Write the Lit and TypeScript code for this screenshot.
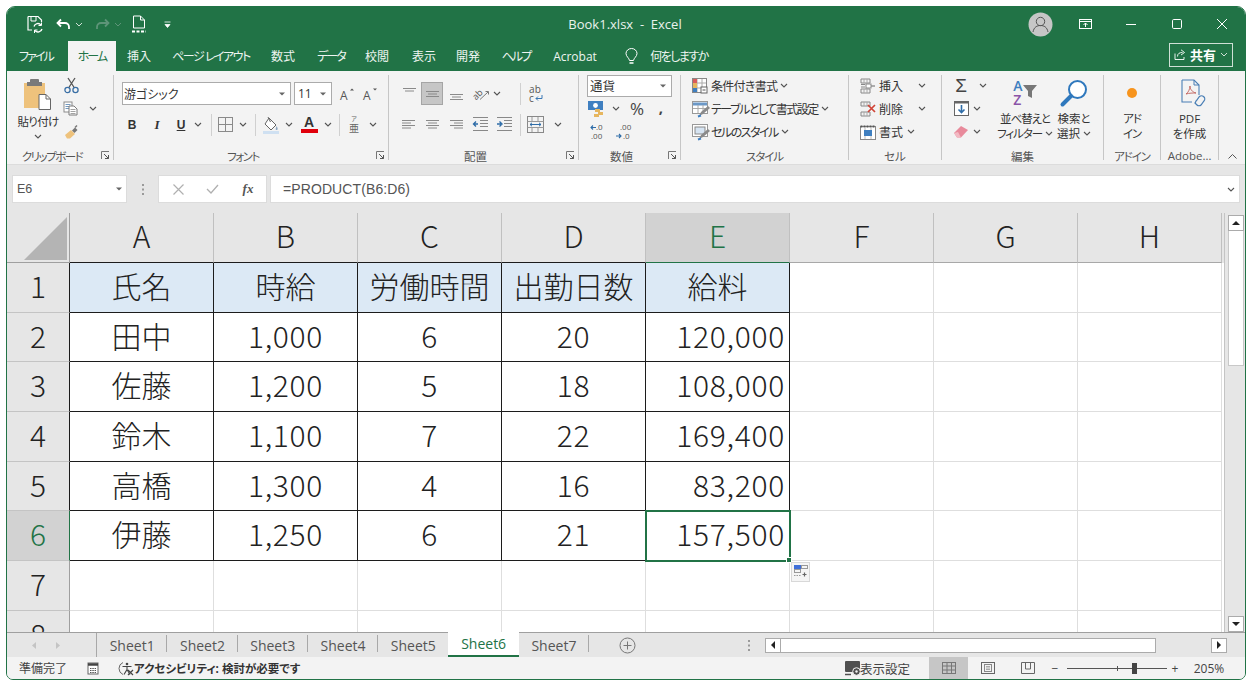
import { LitElement, html, css, svg } from "lit";
import { customElement } from "lit/decorators.js";

type Item = [number, unknown];
/** A row of tools placed by centre x: zero-width anchors separated by computed margins. */
const at = (origin: number, items: Item[]) => {
  let prev = origin;
  return items.map(([c, t]) => {
    const m = c - prev;
    prev = c;
    return html`<span class="at" style="margin-left:${m}px">${t}</span>`;
  });
};
const k = (s: string, cls = "k2") => html`<span class=${cls}>${s}</span>`;
const ic = (w: number, h: number, body: unknown) =>
  html`<svg width=${w} height=${h} viewBox="0 0 ${w} ${h}" fill="none">${body}</svg>`;
const chev = ic(8, 5, svg`<path d="M1 1l3 3 3-3" stroke="#555" stroke-width="1.1"/>`);
const chevW = ic(8, 5, svg`<path d="M1 1l3 3 3-3" stroke="#cfe0d6" stroke-width="1"/>`);
const chevD = ic(8, 5, svg`<path d="M1 1l3 3 3-3" stroke="#5d9478" stroke-width="1"/>`);
const tri = ic(6, 4, svg`<path d="M0 .5h6L3 3.5z" fill="#666"/>`);
const launcher = ic(9, 9, svg`<path d="M.5 8V.5H8" stroke="#777"/><path d="M3 3l4.5 4.5M7.5 4v3.5H4" stroke="#555"/>`);
const div = html`<span class="vdiv"></span>`;
const lines = (kind: string, y0: number, n = 3) => {
  const xs: Record<string, [number, number][]> = {
    l: [[1, 14], [1, 10], [1, 14], [1, 10]],
    c: [[1, 14], [3, 12], [1, 14], [3, 12]],
    r: [[1, 14], [5, 14], [1, 14], [5, 14]],
  };
  return ic(15, 14, svg`${xs[kind].slice(0, n).map(([a, b], i) => svg`<path d="M${a} ${y0 + i * 2.5 + .5}H${b}" stroke="#8a8a8a"/>`)}`);
};
const paste = ic(30, 34, svg`
  <rect x="1" y="6" width="21" height="25" fill="#eec27c"/>
  <rect x="7" y="2" width="9" height="7" rx="1" fill="#7a7a7a"/><rect x="4" y="5" width="15" height="4" fill="#7a7a7a"/>
  <path d="M16 17.5h7l4.5 4.5v10.5H16z" fill="#fff" stroke="#666"/><path d="M23 17.5V22h4.5" stroke="#666"/>`);
const scissors = ic(15, 17, svg`<path d="M4 1l6.5 10M11 1L4.5 11" stroke="#555" stroke-width="1.3"/><circle cx="3.5" cy="13" r="2.6" stroke="#3a6fa5" stroke-width="1.3"/><circle cx="11.5" cy="13" r="2.6" stroke="#3a6fa5" stroke-width="1.3"/>`);
const copy = ic(16, 15, svg`<rect x="1" y="1" width="8" height="10" fill="#fff" stroke="#8b8b8b"/><path d="M2.5 3.5h5M2.5 5.5h5M2.5 7.5h5" stroke="#4f7fae" stroke-width=".8"/><path d="M6 5h5l3 3v6H6z" fill="#fff" stroke="#7a7a7a"/><path d="M7.5 8.5h5M7.5 10.5h5M7.5 12.5h5" stroke="#8b8b8b" stroke-width=".8"/>`);
const brush = ic(15, 14, svg`<path d="M1 10l6-5 4 4-5 4.5H3z" fill="#eec27c"/><path d="M8 5.5l3-3 2.5 2.5-3 3z" fill="#777"/><path d="M11 2.5l2-2" stroke="#777" stroke-width="1.5"/>`);
const fontA = (up: boolean) => ic(15, 14, svg`<text x="0" y="13" font-size="12" fill="#555" font-family="Open Sans">A</text><path d="${up ? "M10 3.5l2-2 2 2" : "M10 1.5l2 2 2-2"}" fill="#555"/>`);
const borders = ic(15, 15, svg`<rect x=".5" y=".5" width="14" height="14" stroke="#8a8a8a"/><path d="M7.5 1v13M1 7.5h13" stroke="#8a8a8a"/>`);
const fill = ic(18, 18, svg`<path d="M7 2l7 7-5 5-6-6z" fill="#fff" stroke="#666"/><path d="M6 1l2.5 5" stroke="#666"/><path d="M14.5 10c1.2 2 1.5 3 .8 3.8-.8.6-1.8 0-1.6-1z" fill="#8fa8c2"/><rect x="1" y="15" width="16" height="3" fill="#cfe0f1"/>`);
const colorA = html`<span class="colora">A</span>`;
const ruby = html`<span class="ruby"><span class="rt">ア</span><span class="rb">亜</span></span>`;
const orient = ic(17, 15, svg`<text transform="rotate(-45 5 11)" x="1" y="12" font-size="9" fill="#555" font-family="Open Sans">ab</text><path d="M7 13.5L15 6M12.5 5.5H15.5V8.5" stroke="#777"/>`);
const wrap = html`<span class="wrapi"><span>ab</span><span class="wl2">c${ic(8, 7, svg`<path d="M7 0v3.500H1M3 1.500L1 3.500l2 2" stroke="#3a78b5"/>`)}</span></span>`;
const indent = (dec: boolean) => ic(16, 15, svg`<path d="M1 .5h15M8 3.5h8M8 6.5h8M8 9.5h8M1 13.5h15" stroke="#888"/><path d="${dec ? "M6 7H2M4 4.5L1.5 7 4 9.5" : "M1 7h4M3.5 4.5L6 7 3.5 9.5"}" stroke="#2f6da8" stroke-width="1.4"/>`);
const merge = ic(17, 17, svg`<rect x=".5" y=".5" width="16" height="16" stroke="#888"/><path d="M.5 5.5h16M.5 11.5h16M5 1v4M11 1v4M5 12v4M11 12v4" stroke="#999"/><path d="M3 8.5h11M5 6.8L3 8.5l2 1.7M12 6.8l2 1.7-2 1.7" stroke="#2f6da8"/>`);
const money = ic(20, 18, svg`<rect x="1" y="1" width="15" height="9" fill="#3f7fc0"/><circle cx="8.5" cy="5.5" r="2.4" fill="#fff"/><rect x="8" y="9" width="5" height="3" fill="#e6b65f"/><rect x="11" y="12" width="5" height="3" fill="#e6b65f"/><rect x="7" y="14" width="5" height="3" fill="#e6b65f"/>`);
const decUp = ic(20, 18, svg`<text x="6" y="7" font-size="8" fill="#555" font-family="Open Sans">.0</text><path d="M6 4.5H1M3 2.5l-2 2 2 2" stroke="#2f6da8" stroke-width="1.1"/><text x="1" y="16" font-size="8" fill="#555" font-family="Open Sans">.00</text>`);
const decDown = ic(20, 18, svg`<text x="5" y="7" font-size="8" fill="#555" font-family="Open Sans">.00</text><path d="M1 13h5M4 11l2 2-2 2" stroke="#2f6da8" stroke-width="1.1"/><text x="8" y="16" font-size="8" fill="#555" font-family="Open Sans">.0</text>`);
const condFmt = ic(16, 16, svg`<rect x=".5" y=".5" width="14" height="14" fill="#fff" stroke="#888"/><path d="M5 1v13M10 1v13M1 5h13M1 10h13" stroke="#aaa"/><rect x="1" y="1" width="4" height="4" fill="#d85c5c"/><rect x="1" y="5" width="4" height="5" fill="#e6b65f"/><rect x="1" y="10" width="4" height="4" fill="#3f7fc0"/><rect x="9" y="9" width="6" height="6" fill="#fff" stroke="#666"/><path d="M10.5 12h3" stroke="#555"/>`);
const tblFmt = ic(19, 16, svg`<rect x=".5" y=".5" width="15" height="12" fill="#fff" stroke="#999"/><path d="M1 3h14" stroke="#6b98c7" stroke-width="3"/><path d="M6 4v8M11 4v8M1 7.5h14" stroke="#aaa"/><path d="M7 15l2-4 7-6 2 2-7 6z" fill="#8a8a8a"/><path d="M6 15.5l3-1" stroke="#3f7fc0" stroke-width="2"/>`);
const cellFmt = ic(19, 16, svg`<rect x=".5" y=".5" width="15" height="12" fill="#fff" stroke="#999"/><rect x="3" y="3" width="10" height="7" fill="#d6e4f2" stroke="#888"/><path d="M7 15l2-4 7-6 2 2-7 6z" fill="#8a8a8a"/><path d="M6 15.5l3-1" stroke="#3f7fc0" stroke-width="2"/>`);
const insertI = ic(18, 16, svg`<path d="M2 1h9v4H2zM2 11h9v4H2zM2 6.5h4M2 9h4" stroke="#888"/><path d="M5 1v4M8 1v4M5 11v4M8 11v4" stroke="#aaa"/><path d="M8 8h8" stroke="#666" stroke-width="1.2"/><rect x="7" y="6" width="5" height="4" fill="#fff" stroke="#888"/>`);
const deleteI = ic(18, 16, svg`<path d="M2 1h9v4H2zM2 11h9v4H2z" stroke="#888"/><path d="M5 1v4M8 1v4M5 11v4M8 11v4" stroke="#aaa"/><path d="M9 4l7 7M16 4l-7 7" stroke="#d04437" stroke-width="1.7"/>`);
const formatI = ic(18, 16, svg`<rect x="1.5" y="2.5" width="15" height="13" fill="#fff" stroke="#888"/><path d="M1.5 2.5h15" stroke="#555" stroke-dasharray="2 1" stroke-width="2"/><path d="M6 3v12M12 3v12" stroke="#bbb"/><rect x="5" y="6" width="8" height="6" fill="#3f7fc0"/>`);
const sigma = html`<span class="sigma">Σ</span>`;
const filldown = ic(15, 15, svg`<rect x=".5" y=".5" width="14" height="14" fill="#fff" stroke="#666"/><path d="M1 1.5h13" stroke="#666" stroke-width="2"/><path d="M7.5 4v7M4.5 8.5l3 3 3-3" stroke="#2f6da8" stroke-width="1.6"/>`);
const eraser = ic(16, 13, svg`<path d="M1 8l7-7 7 4-7 7.5H4z" fill="#e88a9b"/><path d="M1 8l3 4.5h4L5 7z" fill="#f3b9c3"/>`);
const sortI = html`<span class="sorti"><span class="az"><span class="az-a">A</span><span class="az-z">Z</span></span>${ic(14, 14, svg`<path d="M0 0h14L9 6v7L5 11V6z" fill="#777"/>`)}</span>`;
const findI = ic(28, 28, svg`<circle cx="17.5" cy="10.5" r="8.5" stroke="#2f78bd" stroke-width="2" fill="#fff"/><path d="M11 17L2.5 25.5" stroke="#2f78bd" stroke-width="4" stroke-linecap="round"/>`);
const dot = ic(12, 12, svg`<circle cx="6" cy="6" r="5" fill="#f7941d"/>`);
const pdfI = ic(26, 28, svg`<path d="M2 1h12l5 5v10" stroke="#4a7fb5" stroke-width="1.1"/><path d="M14 1v5h5" stroke="#4a7fb5"/><path d="M2 1v22h10" stroke="#4a7fb5" stroke-width="1.1"/><path d="M6 15c2-1 4-5 4-8 0 3 2 6 6 7-3 0-7 0-10 1z" stroke="#c0605a" stroke-width=".9"/><path d="M15 24l2 2c1 1 3 1 4 0l3-4c1-1 1-3 0-4l-.5-.5c-1-1-3-1-4 0l-3 4c-1 1-1 2-1.500 2.500z" stroke="#4a7fb5" stroke-width="1.200"/>`);
const autosave = ic(18, 18, svg`<path d="M2 1.500h10l3.500 3.500v2M2 1.500v13.500h4" stroke="#fff" stroke-width="1.2"/><path d="M5 2v4h5V2" stroke="#fff"/><path d="M8 11.500a4 4 0 0 1 7-1.500M16 14a4 4 0 0 1-7 1.500" stroke="#fff" stroke-width="1.300"/><path d="M15.500 7.500v3h-3M8.500 18v-3h3" stroke="#fff"/>`);
const undo = ic(15, 12, svg`<path d="M5 1.500L1.500 5 5 8.500M2 5h7a4 4 0 0 1 4 4v2" stroke="#fff" stroke-width="1.800"/>`);
const redo = ic(15, 12, svg`<path d="M10 1.500L13.500 5 10 8.500M13 5H6a4 4 0 0 0-4 4v2" stroke="#5d9478" stroke-width="1.800"/>`);
const newdoc = ic(14, 18, svg`<path d="M1.500 1h7l4 4v8h-11z" stroke="#fff"/><path d="M8.500 1v4h4" stroke="#fff"/><path d="M0 16.500h14" stroke="#fff" stroke-width="2" stroke-dasharray="3 1.500"/>`);
const qatDrop = ic(7, 7, svg`<path d="M.5 1h6M1 3.500h5l-2.500 3z" stroke="#fff" fill="#fff" stroke-width=".8"/>`);
const avatar = ic(25, 25, svg`<circle cx="12.500" cy="12.500" r="12" fill="#c6c6c6"/><circle cx="12.500" cy="9.500" r="4.200" stroke="#555"/><path d="M5 20c1-5 4-6.500 7.500-6.500S19 15 20 20" stroke="#555"/>`);
const modeI = ic(13, 10, svg`<rect x=".5" y=".5" width="12" height="9" stroke="#fff"/><path d="M.5 2.500h12" stroke="#fff" stroke-width="1.200"/><path d="M6.500 8V4M4.500 6l2-2 2 2" stroke="#fff"/>`);
const minI = ic(10, 1, svg`<path d="M0 .5h10" stroke="#fff"/>`);
const maxI = ic(10, 10, svg`<rect x=".5" y=".5" width="9" height="9" rx="1.200" stroke="#fff"/>`);
const closeI = ic(10, 10, svg`<path d="M0 0l10 10M10 0L0 10" stroke="#fff"/>`);
const bulb = ic(13, 17, svg`<path d="M4.500 12.500C4.200 10 1 8.500 1 5.500a5.500 5 0 0 1 11 0c0 3-3.200 4.500-3.500 7z" stroke="#fff"/><path d="M4.500 15h4" stroke="#fff" stroke-width="1.300"/>`);
const shareI = ic(12, 11, svg`<path d="M1 4.500v6h9V8" stroke="#fff" stroke-width=".9"/><path d="M3.500 7.500c0-3 2-4 5-4M7 .8l3.500 2.700L7 6" stroke="#fff" stroke-width=".9"/>`);
const cancelI = ic(11, 11, svg`<path d="M.5.5l10 10M10.500.5l-10 10" stroke="#b0b0b0" stroke-width="1.200"/>`);
const enterI = ic(13, 10, svg`<path d="M1 5l4 4 7-8" stroke="#b0b0b0" stroke-width="1.300"/>`);
const grip = ic(2, 11, svg`<path d="M1 0v11" stroke="#9a9a9a" stroke-width="2" stroke-dasharray="2 2.500"/>`);
const triUp = ic(8, 4, svg`<path d="M0 4L4 0l4 4z" fill="#222"/>`);
const triDown = ic(8, 4, svg`<path d="M0 0l4 4 4-4z" fill="#222"/>`);
const triLeft = ic(4, 8, svg`<path d="M4 0L0 4l4 4z" fill="#222"/>`);
const triRight = ic(4, 8, svg`<path d="M0 0l4 4-4 4z" fill="#222"/>`);
const navL = ic(4, 7, svg`<path d="M4 0L0 3.500 4 7z" fill="#c4c4c4"/>`);
const navR = ic(4, 7, svg`<path d="M0 0l4 3.500L0 7z" fill="#c4c4c4"/>`);
const plus = ic(17, 17, svg`<circle cx="8.500" cy="8.500" r="7.500" stroke="#777"/><path d="M8.500 4.500v8M4.500 8.500h8" stroke="#777"/>`);
const macro = ic(12, 13, svg`<rect x="1" y="1" width="10" height="11" fill="#fff" stroke="#666"/><path d="M1 2.500h10" stroke="#444" stroke-width="2.500"/><path d="M3 6.500h6M3 8.500h6M3 10.500h6" stroke="#555" stroke-dasharray="1.500 .8"/>`);
const a11y = ic(16, 15, svg`<path d="M5 1.500a6.500 6.500 0 0 0 0 12" stroke="#666"/><circle cx="9" cy="3" r="1.300" fill="#444"/><path d="M4.500 5.500h9M9 5.500v3l-3 5M9 8.500l3 5" stroke="#444" stroke-width="1.100"/><path d="M10 9l5 5M15 9l-5 5" stroke="#444" stroke-width="1.200"/>`);
const displayI = ic(17, 15, svg`<rect x="0" y="0" width="15" height="11" rx="1" fill="#505050"/><path d="M0 13.500h6" stroke="#505050" stroke-width="1.500"/><circle cx="11.500" cy="10.500" r="3.800" fill="#505050" stroke="#f3f3f3"/><circle cx="11.500" cy="10.500" r="1.200" fill="#f3f3f3"/>`);
const gridI = ic(14, 12, svg`<rect x=".5" y=".5" width="13" height="11" stroke="#777"/><path d="M5 1v10M9.500 1v10M1 4h12M1 8h12" stroke="#777"/>`);
const pageI = ic(14, 12, svg`<rect x=".5" y=".5" width="13" height="11" stroke="#666"/><rect x="3.500" y="2.500" width="7" height="7" stroke="#888"/><path d="M5 4.500h4M5 6h4M5 7.500h4" stroke="#888" stroke-width=".7"/>`);
const breakI = ic(14, 12, svg`<path d="M.5.5h13v11H.5z" stroke="#666"/><path d="M4.500 1v6h5V1" stroke="#666"/>`);
const autofill = ic(18, 19, svg`
  <rect x="2" y="3" width="7" height="4" fill="#3f6fd8"/><rect x="9.500" y="3.500" width="6" height="3" stroke="#999"/>
  <rect x="2.500" y="7.500" width="6" height="3" stroke="#999"/><path d="M2 13.500h7" stroke="#999" stroke-dasharray="1.500 1"/>
  <path d="M12.500 10.500v4M10.500 12.500h4" stroke="#666" stroke-width="1.200"/>`);

const ROWS: string[][] = [
  ["氏名", "時給", "労働時間", "出勤日数", "給料"],
  ["田中", "1,000", "6", "20", "120,000"],
  ["佐藤", "1,200", "5", "18", "108,000"],
  ["鈴木", "1,100", "7", "22", "169,400"],
  ["高橋", "1,300", "4", "16", "83,200"],
  ["伊藤", "1,250", "6", "21", "157,500"],
];
const COLS = ["A", "B", "C", "D", "E", "F", "G", "H"];

@customElement("app-root")
export class AppRoot extends LitElement {
  static styles = css`
    :host { display: block; width: 1252px; height: 686px; background: #fff; overflow: hidden;
      font-family: "Open Sans", "Noto Sans CJK JP", sans-serif; font-feature-settings: "palt"; color: #444; }
    svg { display: block; overflow: visible; flex: none; }
    .at { width: 0; flex: none; display: flex; justify-content: center; align-items: center; white-space: nowrap; }
    .at > * { flex: none; }
    .k0 { letter-spacing: -.7px; } .k1 { letter-spacing: -1.100px; } .k2 { letter-spacing: -1.500px; } .k3 { letter-spacing: -1.900px; }
    .win { margin: 6px 0 0 6px; width: 1240px; height: 674px; box-sizing: border-box; background: #f3f3f3;
      border: 1px solid #217346; border-radius: 9px 9px 7px 7px; overflow: hidden; display: flex; flex-direction: column; }
    .title { height: 34px; background: #217346; display: flex; align-items: center; color: #e9f2ed; font-size: 13px; flex: none; }
    .tabs { height: 30px; background: #217346; display: flex; align-items: center; color: #eef5f1; font-size: 12px; flex: none; }
    .hometab { width: 48px; height: 30px; background: #f3f3f3; color: #217346; display: flex; align-items: center; justify-content: center; }
    .tabs .at { height: 30px; }
    .share { width: 64px; height: 24px; margin-bottom: 3px; border: 1px solid #cfe0d6; box-sizing: border-box; display: flex; align-items: center; justify-content: center; gap: 4px; color: #fff; font-weight: 700; font-size: 13px; }
    .ribbon { height: 93px; flex: none; display: flex; background: #f3f3f3; font-size: 12px; }
    .sep { width: 1px; height: 85px; margin-top: 4px; background: #c6c6c6; flex: none; }
    .g { display: flex; flex-direction: column; flex: none; }
    .g1 { width: 106px; } .g2 { width: 274px; } .g3 { width: 189px; } .g4 { width: 101px; }
    .g5 { width: 167px; } .g6 { width: 92px; } .g7 { width: 161px; } .g8 { width: 56px; } .g9 { width: 57px; }
    .g10 { flex: 1; display: flex; align-items: flex-end; justify-content: center; padding-bottom: 5px; }
    .body { height: 76px; flex: none; }
    .foot { height: 17px; display: flex; align-items: center; font-size: 11.500px; color: #555; }
    .foot .t { flex: 1; text-align: center; white-space: nowrap; }
    .foot .l { width: 16px; display: flex; justify-content: center; flex: none; }
    .clip { display: grid; grid-template-columns: 62px 1fr; }
    .pastebtn { display: flex; flex-direction: column; align-items: center; padding-top: 6px; font-size: 11.500px; line-height: 15px; color: #333; }
    .pastebtn svg:first-child { margin-bottom: 3px; }
    .pastebtn .c2 { margin-top: 5px; }
    .three { padding-top: 3px; }
    .r { display: flex; height: 23px; align-items: center; }
    .r1 { margin-top: 11px; }
    .r2 { margin-top: 8px; }
    .combo { height: 23px; background: #fff; border: 1px solid #ababab; box-sizing: border-box; display: flex; align-items: center; justify-content: space-between; padding: 0 5px 0 1px; flex: none; font-size: 12px; color: #333; }
    .c-font { width: 169px; margin-left: 8px; }
    .c-size { width: 38px; margin-left: 3px; padding-left: 3px; }
    .c-num { width: 85px; height: 22px; margin-left: 8px; padding-left: 2px; font-size: 12.500px; }
    .b { font: 700 12px "Liberation Sans", sans-serif; color: #333; }
    .i { font: italic 700 13px "Liberation Serif", serif; color: #333; }
    .u { font: 700 12px "Liberation Sans", sans-serif; color: #333; text-decoration: underline; }
    .vdiv { width: 1px; height: 22px; background: #d0d0d0; display: block; }
    .colora { font: 700 14px/13px "Liberation Sans", sans-serif; width: 17px; text-align: center; color: #333; border-bottom: 4px solid #e0000b; display: block; }
    .ruby { display: flex; flex-direction: column; align-items: center; color: #666; }
    .rt { font-size: 6px; line-height: 7px; }
    .rb { font-size: 10px; line-height: 11px; }
    .wrapi { display: flex; flex-direction: column; font-size: 10px; line-height: 9px; color: #555; }
    .wl2 { display: flex; align-items: center; gap: 1px; }
    .hl { width: 22px; height: 23px; background: #c6c6c6; border: 1px solid #a5a5a5; box-sizing: border-box; display: flex; align-items: center; justify-content: center; }
    .pct { font-size: 17px; color: #444; }
    .comma { font-size: 15px; font-weight: 700; color: #444; margin-top: -4px; }
    .sty { display: flex; align-items: center; gap: 3px; padding-left: 11px; height: 23px; white-space: nowrap; color: #333; font-size: 12px; }
    .ib { width: 16px; flex: none; display: flex; }
    .cellrow { display: flex; align-items: center; height: 23px; color: #333; font-size: 12px; }
    .sigma { font: 400 19px/19px "Liberation Sans", sans-serif; color: #444; }
    .edit { display: flex; }
    .editl { width: 57px; flex: none; }
    .big { display: flex; flex-direction: column; align-items: center; padding-top: 8px; font-size: 11.500px; line-height: 15px; color: #333; white-space: nowrap; flex: none; }
    .big .ico { height: 32px; display: flex; align-items: flex-start; justify-content: center; }
    .big .txt { display: flex; align-items: center; gap: 3px; }
    .sorti { display: flex; align-items: flex-start; gap: 0; }
    .az { display: flex; flex-direction: column; font-weight: 600; font-size: 14px; line-height: 14px; }
    .az-a { color: #3f7fc0; } .az-z { color: #8a54a8; }
    .sorti svg { margin-top: 6px; }
    .w52 { width: 52px; } .w46 { width: 46px; } .w56 { width: 56px; } .w57 { width: 57px; }
    .ico.dot { padding-top: 8px; height: 24px; }
    .ico.pdf { margin-left: 6px; }
    .fx { height: 49px; flex: none; background: #e6e6e6; display: flex; padding-top: 11px; box-sizing: border-box; box-shadow: inset 0 1px 0 #dcdcdc; font-size: 13.500px; color: #555; }
    .box { height: 28px; background: #fff; border: 1px solid #dcdcdc; box-sizing: border-box; display: flex; align-items: center; flex: none; }
    .name { width: 115px; margin-left: 5px; padding: 0 4px; justify-content: space-between; font-family: "Liberation Sans", sans-serif; font-size: 12.500px; }
    .gripw { width: 31px; height: 28px; display: flex; align-items: center; justify-content: center; flex: none; }
    .panel { width: 109px; }
    .panel .fxt { font: italic 700 13px "Liberation Serif", serif; color: #555; }
    .fbar { width: 970px; margin-left: 3px; padding: 0 4px 0 12px; justify-content: space-between; font-family: "Liberation Sans", sans-serif; font-size: 14px; letter-spacing: .1px; }
    .main { height: 419px; flex: none; display: flex; background: #e6e6e6; }
    .sheet { width: 1217px; flex: none; height: 419px; overflow: hidden; background: #fff; border-right: 1px solid #c4c4c4; }
    .grid { display: grid; grid-template-columns: 63px repeat(8, 144px) 2px; grid-template-rows: 50px repeat(8, 49.700px);
      font-family: "Noto Sans CJK JP", sans-serif; font-weight: 300; font-size: 30px; color: #222; font-feature-settings: normal; }
    .cell { box-sizing: border-box; display: flex; align-items: center; justify-content: center; border-right: 1px solid #dedede; border-bottom: 1px solid #dedede; white-space: nowrap; position: relative; padding-bottom: 5px; }
    .d { letter-spacing: .7px; }
    .num { justify-content: flex-end; padding-right: 4px; }
    .tb { border-right-color: #1c1c1c; border-bottom-color: #1c1c1c; }
    .ch, .rh { background: #e6e6e6; }
    .ch { border-right-color: #c0c0c0; border-bottom-color: #a8a8a8; }
    .rh { border-bottom-color: #c4c4c4; border-right-color: #9f9f9f; }
    .rh.tb { border-right-color: #1c1c1c; border-bottom-color: #c4c4c4; }
    .ch.tb { border-right-color: #c0c0c0; border-bottom-color: #1c1c1c; }
    .ch.sel, .rh.sel { background: #d2d2d2; color: #217346; }
    .rh.sel { border-right-color: #217346; }
    .ch.sel { border-bottom-color: #217346; }
    .corner { background: #e6e6e6; border-right-color: #9f9f9f; border-bottom-color: #9f9f9f; padding: 0; display: flex; align-items: flex-end; justify-content: flex-end; }
    .corner svg { margin: 0 2px 2px 0; }
    .hdr { background: #dce9f5; }
    .filler { border: 0; background: transparent; }
    .filler.top { background: #e6e6e6; }
    .active { outline: 2px solid #217346; outline-offset: -1px; z-index: 2; }
    .handle { position: absolute; right: -3px; bottom: -3px; background: #217346; border: 1px solid #fff; box-sizing: content-box; width: 4px; height: 4px; }
    .afo { position: absolute; left: 145px; top: 50.500px; width: 19px; height: 20px; background: #f5f5f5; border: 1px solid #d8d8d8; box-sizing: border-box; display: flex; align-items: center; justify-content: center; }
    .vbar { flex: 1; display: flex; flex-direction: column; padding: 2px 2px 0 3px; }
    .sbtn { width: 16px; height: 16px; background: #fff; border: 1px solid #ababab; box-sizing: border-box; display: flex; align-items: center; justify-content: center; flex: none; }
    .vthumb { height: 135px; background: #fff; border: 1px solid #c8c8c8; border-top: 0; box-sizing: border-box; width: 16px; }
    .vspace { flex: 1; }
    .sheets { height: 25px; flex: none; background: #e6e6e6; border-top: 1px solid #9f9f9f; box-sizing: border-box; display: flex; align-items: center; font-size: 14px; color: #555; font-family: "Open Sans", sans-serif; }
    .stabs { display: flex; height: 24px; margin-left: 38px; flex: none; border-left: 1px solid #a8a8a8; }
    .stab { width: 70.300px; box-sizing: border-box; display: flex; align-items: center; justify-content: center; position: relative; }
    .stab::after { content: ""; position: absolute; right: 0; top: 2px; bottom: 5px; width: 1px; background: #a8a8a8; }
    .stab.on { background: #fff; color: #217346; border-bottom: 2px solid #217346; margin-top: -1px; height: 25px; }
    .stab.on::after, .stab.pre::after { display: none; }
    .hwrap { display: flex; align-items: center; margin-left: 16px; }
    .hbtn { width: 16px; height: 15px; }
    .hthumb { width: 375px; height: 15px; background: #fff; border: 1px solid #ababab; border-left: 0; box-sizing: border-box; }
    .hwrap .gap { width: 55px; }
    .status { flex: 1; background: #f3f3f3; display: flex; align-items: center; font-size: 12px; color: #444; }
    .status .bold { font-weight: 700; font-size: 11.500px; color: #333; }
    .status .at { height: 22px; }
    .viewsel { width: 39px; height: 22px; background: #c6c6c6; display: flex; align-items: center; justify-content: center; }
    .slider { width: 100px; height: 11px; position: relative; display: block; }
    .slider::before { content: ""; position: absolute; left: 0; right: 0; top: 5px; height: 1px; background: #555; }
    .slider .tick { position: absolute; left: 50px; top: 3px; width: 1px; height: 5px; background: #555; }
    .slider .thumb { position: absolute; left: 65px; top: 0; width: 5px; height: 11px; background: #444; }
    .disp { font-size: 12.500px; }
  `;

  private group(cls: string, body: unknown, label: unknown, launch = true) {
    return html`<div class="g ${cls}"><div class="body">${body}</div>
      <div class="foot"><span class="t">${label}</span>${launch ? html`<span class="l">${launcher}</span>` : ""}</div></div><div class="sep"></div>`;
  }

  render() {
    return html`<div class="win">
      <div class="title">${at(7, [
        [35, autosave], [63, undo], [79, chevW], [102, redo], [118, chevD], [139, newdoc], [167, qatDrop],
        [625, html`<span>Book1.xlsx&nbsp; - &nbsp;Excel</span>`],
        [1040, avatar], [1085, modeI], [1131, minI], [1177, maxI], [1222, closeI],
      ])}</div>
      <div class="tabs">${at(7, [
        [36, k("ファイル", "k3")], [92, html`<span class="hometab">${k("ホーム", "k3")}</span>`], [139, "挿入"], [211, k("ページ レイアウト", "k2")], [283, "数式"], [331, k("データ", "k3")],
        [377, "校閲"], [424, "表示"], [468, "開発"], [516, k("ヘルプ", "k3")], [575, "Acrobat"], [631, bulb], [679, k("何をしますか", "k2")],
        [1201, html`<span class="share">${shareI}<span>共有</span>${chevW}</span>`],
      ])}</div>
      <div class="ribbon">
        ${this.group("g1", html`<div class="clip">
          <div class="pastebtn">${paste}${k("貼り付け", "k0")}<span class="c2">${chev}</span></div>
          <div class="three">
            <div class="r">${at(69, [[71, scissors]])}</div>
            <div class="r">${at(69, [[71, copy], [93, chev]])}</div>
            <div class="r">${at(69, [[71, brush]])}</div>
          </div></div>`, k("クリップボード", "k2"))}
        ${this.group("g2", html`
          <div class="r r1"><span class="combo c-font"><span>游ゴシック</span>${tri}</span><span class="combo c-size"><span>11</span>${tri}</span>
            ${at(332, [[347, fontA(true)], [370, fontA(false)]])}</div>
          <div class="r r2">${at(114, [
            [132, html`<span class="b">B</span>`], [157, html`<span class="i">I</span>`], [181, html`<span class="u">U</span>`], [198, chev], [211, div],
            [225, borders], [243, chev], [255, div], [271, fill], [289, chev], [309, colorA], [328, chev], [339, div], [354, ruby], [373, chev],
          ])}</div>`, k("フォント", "k2"))}
        ${this.group("g3", html`
          <div class="r r1">${at(389, [
            [409, lines("c", 1, 2)], [432, html`<span class="hl">${lines("c", 4, 3)}</span>`], [456, lines("c", 7, 3)], [481, orient], [497, chev], [520, div], [536, wrap],
          ])}</div>
          <div class="r r2">${at(389, [
            [408, lines("l", 2, 4)], [432, lines("c", 2, 4)], [456, lines("r", 2, 4)], [480, indent(true)], [504, indent(false)], [520, div], [535, merge], [558, chev],
          ])}</div>`, "配置")}
        ${this.group("g4", html`<div class="three">
          <div class="r"><span class="combo c-num"><span>通貨</span>${tri}</span></div>
          <div class="r">${at(579, [[597, money], [616, chev], [637, html`<span class="pct">%</span>`], [661, html`<span class="comma">,</span>`]])}</div>
          <div class="r">${at(579, [[600, decUp], [625, decDown]])}</div></div>`, "数値")}
        ${this.group("g5", html`<div class="three">
          <div class="sty"><span class="ib">${condFmt}</span>${k("条件付き書式", "k0")}${chev}</div>
          <div class="sty"><span class="ib">${tblFmt}</span>${k("テーブルとして書式設定", "k2")}${chev}</div>
          <div class="sty"><span class="ib">${cellFmt}</span>${k("セルのスタイル", "k2")}${chev}</div></div>`, k("スタイル", "k1"), false)}
        ${this.group("g6", html`<div class="three">
          <div class="cellrow">${at(849, [[868, insertI], [891, "挿入"], [922, chev]])}</div>
          <div class="cellrow">${at(849, [[868, deleteI], [891, "削除"], [922, chev]])}</div>
          <div class="cellrow">${at(849, [[868, formatI], [891, "書式"], [911, chev]])}</div></div>`, "セル", false)}
        ${this.group("g7", html`<div class="edit">
          <div class="editl three">
            <div class="r">${at(942, [[961, sigma], [983, chev]])}</div>
            <div class="r">${at(942, [[961, filldown], [977, chev]])}</div>
            <div class="r">${at(942, [[961, eraser], [977, chev]])}</div>
          </div>
          <div class="big w52"><div class="ico">${sortI}</div><div class="txt">${k("並べ替えと", "k1")}</div><div class="txt">${k("フィルター", "k1")} ${chev}</div></div>
          <div class="big w46"><div class="ico">${findI}</div><div class="txt">検索と</div><div class="txt">選択 ${chev}</div></div>
        </div>`, "編集", false)}
        ${this.group("g8", html`<div class="big w56"><div class="ico dot">${dot}</div><div class="txt">${k("アド", "k1")}</div><div class="txt">${k("イン", "k1")}</div></div>`, k("アドイン", "k1"), false)}
        ${this.group("g9", html`<div class="big w57"><div class="ico pdf">${pdfI}</div><div class="txt">PDF</div><div class="txt">を作成</div></div>`, "Adobe…", false)}
        <div class="g10">${ic(9, 5, svg`<path d="M.5 4.500l4-4 4 4" stroke="#555"/>`)}</div>
      </div>
      <div class="fx">
        <div class="box name"><span>E6</span>${tri}</div>
        <div class="gripw">${grip}</div>
        <div class="box panel">${at(158, [[177, cancelI], [211, enterI], [247, html`<span class="fxt">fx</span>`]])}</div>
        <div class="box fbar"><span>=PRODUCT(B6:D6)</span>${chev}</div>
      </div>
      <div class="main">
        <div class="sheet"><div class="grid">${this.gridCells()}</div></div>
        <div class="vbar">
          <div class="sbtn">${triUp}</div><div class="vthumb"></div><div class="vspace"></div>
          <div class="sbtn">${triDown}</div>
        </div>
      </div>
      <div class="sheets">
        ${at(7, [[34, navL], [58, navR]])}
        <div class="stabs">${["Sheet1", "Sheet2", "Sheet3", "Sheet4", "Sheet5", "Sheet6", "Sheet7"].map((s, i) =>
          html`<div class="stab ${i === 5 ? "on" : ""} ${i === 4 ? "pre" : ""}">${s}</div>`)}</div>
        ${at(589, [[627, plus], [749, grip]])}
        <div class="hwrap">
          <div class="sbtn hbtn">${triLeft}</div><div class="hthumb"></div><div class="gap"></div><div class="sbtn hbtn">${triRight}</div>
        </div>
      </div>
      <div class="status">${at(7, [
        [43, "準備完了"], [93, macro], [126, a11y], [217, html`<span class="bold">アクセシビリティ: 検討が必要です</span>`],
        [853, displayI], [885, html`<span class="disp">表示設定</span>`],
        [948.500, html`<span class="viewsel">${gridI}</span>`], [988, pageI], [1028, breakI],
        [1055, "−"], [1117, html`<span class="slider"><span class="tick"></span><span class="thumb"></span></span>`], [1175, "+"],
        [1209, "205%"],
      ])}</div>
    </div>`;
  }

  private gridCells() {
    const out: unknown[] = [];
    out.push(html`<div class="cell corner">${ic(43, 43, svg`<path d="M43 0v43H0z" fill="#b4b4b4"/>`)}</div>`);
    COLS.forEach((c, i) => out.push(html`<div class="cell ch ${i < 5 ? "tb" : ""} ${c === "E" ? "sel" : ""}">${c}</div>`));
    out.push(html`<div class="cell filler top"></div>`);
    for (let r = 0; r < 8; r++) {
      const row = ROWS[r];
      out.push(html`<div class="cell rh ${row ? "tb" : ""} ${r === 5 ? "sel" : ""}">${r + 1}</div>`);
      for (let c = 0; c < 8; c++) {
        const v = row ? row[c] : undefined;
        const isNum = c === 4 && r > 0;
        const active = r === 5 && c === 4;
        const digits = v !== undefined && /^[\d,]+$/.test(v);
        out.push(html`<div class="cell ${row && c < 5 ? "tb" : ""} ${r === 0 && c < 5 ? "hdr" : ""} ${isNum ? "num" : ""} ${digits ? "d" : ""} ${active ? "active" : ""}">${v ?? ""}${active
          ? html`<span class="handle"></span><span class="afo">${autofill}</span>` : ""}</div>`);
      }
      out.push(html`<div class="cell filler"></div>`);
    }
    return out;
  }
}
